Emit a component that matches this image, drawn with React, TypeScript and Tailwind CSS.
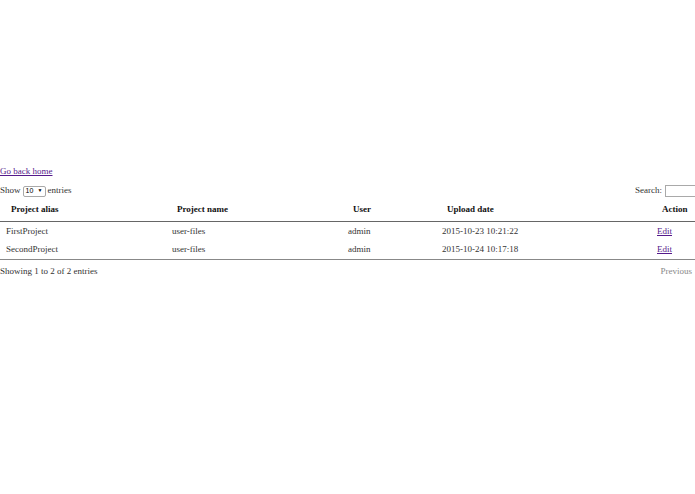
import React from 'react';

interface Upload {
  alias: string;
  name: string;
  user: string;
  date: string;
}

const rows: Upload[] = [
  { alias: 'FirstProject', name: 'user-files', user: 'admin', date: '2015-10-23 10:21:22' },
  { alias: 'SecondProject', name: 'user-files', user: 'admin', date: '2015-10-24 10:17:18' },
];

export default function App() {
  return (
    <div className="w-[695px] h-[494px] bg-white text-[9px] text-[#333] pt-[165px] overflow-hidden" style={{ fontFamily: '"Liberation Serif", serif' }}>
      {/* back link */}
      <a href="#" className="block h-[12px] leading-[12px] text-[#551a8b] underline">Go back home</a>

      {/* datatable controls */}
      <div className="mt-[8px] flex justify-between items-center h-[12px]">
        <div className="flex items-center">
          <span>Show</span>
          <span className="mx-[2px] h-[11px] w-[23px] border border-[#a9a9a9] rounded-[2px] flex items-center justify-between px-[2px] text-[7px] text-black" style={{ fontFamily: '"Liberation Sans", sans-serif' }}>
            <span>10</span>
            <span className="text-[5px]">▼</span>
          </span>
          <span>entries</span>
        </div>
        <div className="flex items-center">
          <span>Search:</span>
          <span className="ml-[3px] -mr-[10px] h-[12px] w-[40px] border border-[#a9a9a9] bg-white"></span>
        </div>
      </div>

      {/* table */}
      <table className="mt-[2px] w-full border-collapse">
        <thead>
          <tr className="h-[22px] border-b border-[#666] text-[#111]">
            <th className="w-[166px] text-left font-bold pl-[11px]">Project alias</th>
            <th className="w-[176px] text-left font-bold pl-[11px]">Project name</th>
            <th className="w-[94px] text-left font-bold pl-[11px]">User</th>
            <th className="w-[215px] text-left font-bold pl-[11px]">Upload date</th>
            <th className="text-left font-bold pl-[11px]">Action</th>
          </tr>
        </thead>
        <tbody>
          {rows.map((r) => (
            <tr key={r.alias} className="h-[19px]">
              <td className="pl-[6px] pt-[1px]">{r.alias}</td>
              <td className="pl-[6px] pt-[1px]">{r.name}</td>
              <td className="pl-[6px] pt-[1px]">{r.user}</td>
              <td className="pl-[6px] pt-[1px]">{r.date}</td>
              <td className="pl-[6px] pt-[1px]">
                <a href="#" className="text-[#551a8b] underline">Edit</a>
              </td>
            </tr>
          ))}
        </tbody>
      </table>
      <div className="border-t border-[#888]"></div>

      {/* footer */}
      <div className="flex justify-between items-center h-[24px]">
        <span>Showing 1 to 2 of 2 entries</span>
        <span className="text-[#888] pr-[3px]">Previous</span>
      </div>
    </div>
  );
}
